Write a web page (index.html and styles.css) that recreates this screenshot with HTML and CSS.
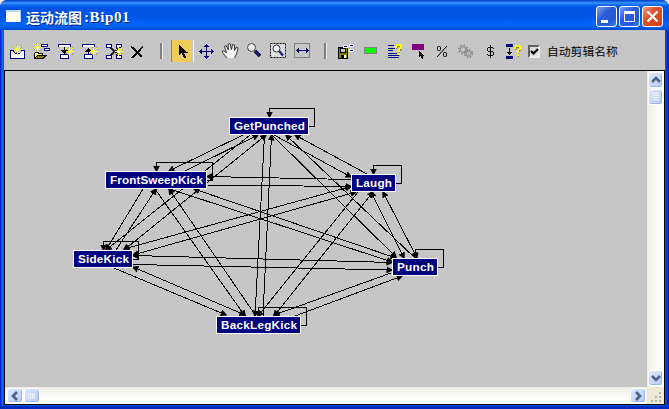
FILE: index.html
```html
<!DOCTYPE html>
<html lang="zh-CN">
<head>
<meta charset="utf-8">
<title>运动流图:Bip01</title>
<link rel="stylesheet" href="styles.css">
</head>
<body>
<svg width="0" height="0" class="defs">
  <defs>
    <g id="burst"><path d="M0-5V4M-4 0H4M-3-3L3 3M-3 3L3-3" stroke="#ffff30"/><path d="M-2-4h1M2-4h1M-4 2h1M3 2h1M-2 3h1M2 3h1M-4-2h1M3-2h1" stroke="#a5a04c"/><path d="M-1-1h2v2h-2z" fill="#fffff0"/></g>
    <path id="cursor" d="M0 0V11L2.6 8.6L4.8 13H7L5 8H8.5Z"/>
    <path id="help" d="M1 4V2.500L2 1H5L6 2V4L4 5.500V7.500M4 9V11" fill="none" stroke-width="1.800"/>
    <marker id="arrow" viewBox="0 0 7 7" refX="5.500" refY="3.500" markerWidth="7" markerHeight="7" markerUnits="userSpaceOnUse" orient="auto-start-reverse"><path d="M0 0L7 3.500L0 7Z"/></marker>
  </defs>
</svg>
<div class="window">
  <header class="titlebar">
    <span class="app-icon"></span>
    <h1 class="title">运动流图<span class="latin">:Bip01</span></h1>
    <div class="controls">
      <span class="control"><svg width="19" height="19"><path d="M4 14.500H11" stroke="#fff" stroke-width="3"/></svg></span>
      <span class="control"><svg width="19" height="19"><path d="M4.500 5V14.500H14.500V5" fill="none" stroke="#fff"/><path d="M4 5.500H15" stroke="#fff" stroke-width="3"/></svg></span>
      <span class="control close"><svg width="19" height="19"><path d="M4.500 4.500L14.500 14.500M14.500 4.500L4.500 14.500" stroke="#fff" stroke-width="2.300"/></svg></span>
    </div>
  </header>
  <nav class="toolbar">
    <svg class="tool" viewBox="5 40 24 22"><path d="M10.500 50.500H13L15 53H20L22 50.500H24.500V58.500H10.500Z" fill="#fff" stroke="#000080"/><use href="#burst" x="17.500" y="49.500"/></svg>
    <svg class="tool" viewBox="29 40 24 22"><use href="#burst" x="37.500" y="47.500"/><g fill="#fff" stroke="#000080"><path d="M41.500 44.500H47.500V46.500H41.500ZM44.500 48.500H49.500V50.500H44.500Z"/></g><path d="M34.500 58.500V53.500L36 52.500H38L39 53.500H42.500V55.500" fill="#ffff70" stroke="#000"/><path d="M34.500 58.500L37.500 55.500H46L43 58.500Z" fill="#808000" stroke="#000"/></svg>
    <svg class="tool" viewBox="53 40 24 22"><path d="M58.500 47V44.500H70.500V47M60.500 54.500H68.500V58.500H60.500Z" fill="#fff" stroke="#000080"/><path d="M64.500 47V53M62 50.500L64.500 53L67 50.500Z" stroke="#000"/><use href="#burst" x="69.500" y="51.500"/></svg>
    <svg class="tool" viewBox="77 40 24 22"><path d="M82.500 47V44.500H94.500V47M84.500 54.500H92.500V58.500H84.500Z" fill="#fff" stroke="#000080"/><path d="M88.500 49V54M86 51.500L88.500 49L91 51.500Z" stroke="#000"/><use href="#burst" x="93.500" y="51.500"/></svg>
    <svg class="tool" viewBox="101 40 24 22"><path d="M110 47L119 56M119 47L110 56" stroke="#223" stroke-width="1.500"/><path d="M106.500 44.500H111.500V47.500H106.500ZM116.500 44.500H121.500V47.500H116.500ZM106.500 55.500H111.500V58.500H106.500ZM116.500 55.500H121.500V58.500H116.500Z" fill="#fff" stroke="#000080"/><use href="#burst" x="118.500" y="51.500"/></svg>
    <svg class="tool" viewBox="125 40 24 22"><path d="M131 46.500L142 57M143 46.500L132 58" stroke="#000" stroke-width="2"/></svg>
    <i class="separator"></i>
    <span class="selected"><svg class="tool" viewBox="170 40 24 22"><use href="#cursor" x="179" y="44.500"/></svg></span>
    <svg class="tool" viewBox="194 40 24 22"><path d="M199 51.500H214M206.500 44V59" stroke="#000080"/><path d="M199 51.500L202 48.500V54.500ZM214 51.500L211 48.500V54.500ZM206.500 44L203.500 47H209.500ZM206.500 59L203.500 56H209.500Z" fill="#000080"/></svg>
    <svg class="tool smooth" viewBox="218 40 24 22"><path d="M227 58L222.500 52.500V51H224.500L226.500 53L224.500 46.500L226 45.500L228.500 50L228 44.500L230 43.500L231.500 49.500L232.500 44.500L234.500 45L234.500 50.500L236.500 47L238 48L236.500 54L234.500 58" fill="#f4f4f4" stroke="#222" stroke-width=".9"/></svg>
    <svg class="tool smooth" viewBox="242 40 24 22"><path d="M255 51L260 56" stroke="#000" stroke-width="3.600"/><path d="M255 51L259.500 55.500" stroke="#202090" stroke-width="2"/><circle cx="251.500" cy="47.500" r="4" fill="#e9eeee" stroke="#444"/><path d="M249 48L252 45" stroke="#fff"/></svg>
    <svg class="tool smooth" viewBox="266 40 24 22"><path d="M270.500 43.500H285.500V57.500H270.500Z" fill="#ddd" stroke="#000" stroke-dasharray="2 1"/><path d="M279 51L283 55.500" stroke="#202080" stroke-width="2.500"/><circle cx="276.500" cy="48.500" r="3.500" fill="#eef" stroke="#333"/></svg>
    <svg class="tool" viewBox="290 40 24 22"><path d="M294.500 43.500H309.500V57.500H294.500Z" fill="none" stroke="#808080"/><path d="M296 50.500H308" stroke="#000080"/><path d="M295.500 50.500L298.500 47.500V53.500ZM308.500 50.500L305.500 47.500V53.500Z" fill="#000050"/></svg>
    <i class="separator second"></i>
    <svg class="tool" viewBox="334 40 24 22"><path d="M338.500 47.500H347.500V58.500H338.500Z" fill="#808000" stroke="#000"/><path d="M340.500 48.500H345.500V52.500H340.500Z" fill="#ccc" stroke="#000"/><path d="M341 55H346V59H341Z"/><path d="M344 55H345.500V58H344Z" fill="#fff"/><path d="M343 45H348V48H343ZM349 44H354V47H349ZM349 49H354V52H349Z" fill="#fff"/><path d="M344 46.500H347M350 45.500H353M350 50.500H353" stroke="#000080"/></svg>
    <svg class="tool" viewBox="358 40 24 22"><path d="M364.500 47.500H376.500V53.500H364.500Z" fill="#0f0" stroke="#808080"/></svg>
    <svg class="tool" viewBox="382 40 24 22"><path d="M388 45.500H394M388 48.500H395M388 50.500H393M388 53.500H397M388 55.500H399M388 57.500H399" stroke="#000080"/><use href="#help" x="395.500" y="45" stroke="#85804b"/><use href="#help" x="395" y="44" stroke="#ff0"/></svg>
    <svg class="tool" viewBox="406 40 24 22"><path d="M412 44H424V50H412Z" fill="#800080"/><use href="#cursor" transform="translate(419 50.500) scale(.66)"/></svg>
    <svg class="tool smooth" viewBox="430 40 24 22"><g fill="none" stroke="#000"><path d="M447 46L437 57"/><rect x="437.500" y="46.500" width="3" height="4" rx="1"/><rect x="443.500" y="52.500" width="3" height="4" rx="1"/></g></svg>
    <svg class="tool smooth" viewBox="454 40 24 22"><g fill="none" stroke="#858585"><circle cx="463" cy="49.500" r="2.800"/><circle cx="463" cy="49.500" r="4.200" stroke-dasharray="1.500 1.800" stroke-width="1.700"/><circle cx="468.500" cy="53.500" r="2.500" fill="#bbb"/><circle cx="468.500" cy="53.500" r="3.800" stroke-dasharray="1.500 1.500" stroke-width="1.700"/></g></svg>
    <svg class="tool" viewBox="478 40 24 22"><path d="M490.500 45V58M494 48.500L492.500 47.500H488.500L487.500 48.500V50.500L488.500 51.500H492.500L493.500 52.500V54.500L492.500 55.500H488.500L487 54.500" fill="none" stroke="#000"/></svg>
    <svg class="tool" viewBox="502 40 24 22"><path d="M506 44H513V47H506ZM506 56H513V59H506Z" fill="#000080"/><path d="M509.500 48V55" stroke="#000"/><path d="M506.500 51.500H512.500L509.500 55Z"/><use href="#help" x="514.500" y="46" stroke="#85804b"/><use href="#help" x="514" y="45" stroke="#ff0"/></svg>
    <label class="auto-name"><span class="checkbox"><svg width="9" height="9"><path d="M1 4L3.500 6.500L8 2" fill="none" stroke="#000" stroke-width="2.200"/></svg></span>自动剪辑名称</label>
  </nav>
  <main class="workspace">
    <svg class="graph" viewBox="5 71 642 316">
      <g class="edges">
        <path marker-end="url(#arrow)" d="M243 135L169 171"/>
        <path marker-end="url(#arrow)" d="M185 171L258 135"/>
        <path marker-end="url(#arrow)" d="M250 135L106 250"/>
        <path marker-end="url(#arrow)" marker-start="url(#arrow)" d="M266 135L124 250"/>
        <path marker-end="url(#arrow)" d="M264.500 135L255 316"/>
        <path marker-start="url(#arrow)" d="M271.500 135L263 316"/>
        <path marker-end="url(#arrow)" d="M272 135L396 257"/>
        <path marker-start="url(#arrow)" d="M286 135L415 258"/>
        <path marker-end="url(#arrow)" d="M274 135L351 177"/>
        <path marker-start="url(#arrow)" d="M295 135L367 174"/>
        <path marker-start="url(#arrow)" d="M207 176.500L351 179.500"/>
        <path marker-end="url(#arrow)" d="M207 185L351 186.500"/>
        <path marker-end="url(#arrow)" d="M143 189L106 250"/>
        <path marker-start="url(#arrow)" d="M156 189L116 250"/>
        <path marker-end="url(#arrow)" d="M155 189L245 316"/>
        <path marker-start="url(#arrow)" d="M169 189L256 316"/>
        <path marker-end="url(#arrow)" d="M170 189L392 262"/>
        <path marker-start="url(#arrow)" marker-end="url(#arrow)" d="M194 189L396 258"/>
        <path marker-start="url(#arrow)" marker-end="url(#arrow)" d="M351 186.500L124 249"/>
        <path marker-start="url(#arrow)" marker-end="url(#arrow)" d="M356 192L133 255"/>
        <path marker-start="url(#arrow)" marker-end="url(#arrow)" d="M133 255.500L392 262.500"/>
        <path marker-end="url(#arrow)" d="M133 264.500L392 270"/>
        <path marker-end="url(#arrow)" d="M114 268L226 315"/>
        <path marker-start="url(#arrow)" marker-end="url(#arrow)" d="M133 267L245 315"/>
        <path marker-end="url(#arrow)" d="M358 192L258 316"/>
        <path marker-start="url(#arrow)" marker-end="url(#arrow)" d="M373 192L274 316"/>
        <path marker-start="url(#arrow)" marker-end="url(#arrow)" d="M371 192L404 258"/>
        <path marker-start="url(#arrow)" marker-end="url(#arrow)" d="M383 192L417 258"/>
        <path marker-end="url(#arrow)" d="M391 273L274 315"/>
        <path marker-start="url(#arrow)" d="M402 276L295 316"/>
      </g>
      <g class="loops">
        <path marker-end="url(#arrow)" d="M309 126.500H314.500V108.500H269.500V117"/>
        <path marker-end="url(#arrow)" d="M207 180.500H212.500V162.500H156.500V171"/>
        <path marker-end="url(#arrow)" d="M396 183.500H401.500V165.500H373.500V174"/>
        <path marker-end="url(#arrow)" d="M133 259.500H138.500V241.500H103.500V250"/>
        <path marker-end="url(#arrow)" d="M438 267.500H443.500V249.500H415.500V258"/>
        <path marker-end="url(#arrow)" d="M301 325.500H306.500V307.500H258.500V316"/>
      </g>
      <g class="nodes">
        <rect x="229.500" y="117.500" width="79" height="17"/><text x="234" y="130" textLength="71">GetPunched</text>
        <rect x="105.500" y="171.500" width="101" height="17"/><text x="110" y="184" textLength="93">FrontSweepKick</text>
        <rect x="351.500" y="174.500" width="44" height="17"/><text x="356" y="187" textLength="36">Laugh</text>
        <rect x="73.500" y="250.500" width="59" height="17"/><text x="78" y="263" textLength="51">SideKick</text>
        <rect x="392.500" y="258.500" width="45" height="17"/><text x="397" y="271" textLength="37">Punch</text>
        <rect x="216.500" y="316.500" width="84" height="17"/><text x="221" y="329" textLength="76">BackLegKick</text>
      </g>
    </svg>
    <div class="scroll vertical">
      <span class="scroll-button"><svg width="14" height="14"><path d="M3 9L7 5L11 9"/></svg></span>
      <span class="scroll-button thumb"><svg width="14" height="14"><path d="M4 3.500H10M4 5.500H10M4 7.500H10M4 9.500H10"/></svg></span>
      <span class="scroll-button last"><svg width="14" height="14"><path d="M3 5L7 9L11 5"/></svg></span>
    </div>
    <div class="scroll horizontal">
      <span class="scroll-button"><svg width="14" height="14"><path d="M9 3L5 7L9 11"/></svg></span>
      <span class="scroll-button thumb"><svg width="14" height="14"><path d="M3.500 4V10M5.500 4V10M7.500 4V10M9.500 4V10"/></svg></span>
      <span class="scroll-button last"><svg width="14" height="14"><path d="M5 3L9 7L5 11"/></svg></span>
    </div>
    <div class="grip"><svg width="17" height="17"><path d="M12 5h2v2h-2zM8 9h2v2H8zM12 9h2v2h-2zM4 13h2v2H4zM8 13h2v2H8zM12 13h2v2h-2z"/></svg></div>
  </main>
</div>
</body>
</html>
```
FILE: styles.css
```css
* { box-sizing: border-box; }
body { margin: 0; background: #ece9d8; overflow: hidden; }
svg { display: block; flex: none; }
.defs { position: absolute; }
.window {
  width: 669px; height: 409px; display: flex; flex-direction: column;
  padding: 0 4px 4px; border-radius: 7px 7px 0 0; overflow: hidden;
  background: linear-gradient(90deg, #0019cf 0, #0831d9 1px, #166aee 2px, #0855dd 4px, #0855dd 665px, #0441d8 666px, #0020a8 669px);
  box-shadow: inset 0 -3px #002bc0;
}
.titlebar {
  height: 30px; flex: none; margin: 0 -4px; padding: 0 6px;
  display: flex; align-items: center;
  background: linear-gradient(#0841c6 0, #0855dd 1px, #3c95ff 3px, #0b68f0 5px, #0054e3 8px, #0055e5 17px, #0266fb 24px, #0262ee 27px, #0046cb 30px);
}
.app-icon { width: 15px; height: 12px; margin-top: 2px; background: #fffff4; border-top: 2px solid #b9d8ff; border-right: 1px solid #a9c8f0; }
.title {
  margin: 3px 0 0 5px; display: flex; align-items: center; color: #fff;
  font: bold 14px/20px "Noto Sans CJK SC", sans-serif; text-shadow: 1px 1px #00268a;
}
.latin { font: bold 15px/20px "Liberation Serif", serif; letter-spacing: .6px; margin-left: 2px; }
.controls { margin-left: auto; display: flex; gap: 2px; margin-top: 3px; }
.control {
  width: 21px; height: 21px; border-radius: 3px; display: grid; place-items: center;
  border: 1px solid #fff; background: linear-gradient(135deg, #7b9ff0, #2a5ddb 40%, #2458d8 75%, #3d82f4);
}
.close { background: linear-gradient(135deg, #f0a088, #df5029 40%, #d8481f 75%, #c63a12); }
.toolbar {
  height: 40px; flex: none; display: flex; align-items: center; padding: 2px 0 0 1px;
  background: #c6c6c6;
}
.tool { width: 24px; height: 22px; fill: #000; shape-rendering: crispEdges; }
.smooth { shape-rendering: auto; }
.separator { width: 21px; height: 16px; flex: none; display: flex; padding-left: 11px; }
.second { width: 20px; padding-left: 10px; }
.separator::before { content: ""; width: 2px; background: #808080; border-right: 1px solid #eee; }
.selected { background: linear-gradient(90deg, #c6c6c6 1px, #808080 1px 2px, #efcb59 2px 22px, #c6c6c6 22px 23px, #f4f4f4 23px); }
.auto-name {
  display: flex; align-items: center; margin-left: 2px; gap: 7px;
  font: 11.8px/16px "Noto Sans CJK SC", sans-serif; white-space: nowrap; color: #000;
}
.checkbox {
  width: 12px; height: 13px; background: #ddd; display: grid; place-items: center;
  border: 2px solid; border-color: #606060 #eee #eee #606060;
}
.workspace {
  flex: none; height: 335px; display: grid;
  grid-template: 316px 17px / 642px 17px;
  border: 1px solid #000; background: #c6c6c6;
}
.graph { width: 642px; height: 316px; background: #c6c6c6; }
.edges, .loops { fill: none; stroke: #000; stroke-width: 1; shape-rendering: crispEdges; }
.nodes rect { fill: #000080; stroke: #fff; shape-rendering: crispEdges; }
.nodes text { fill: #fff; font: bold 11.7px "Liberation Sans", sans-serif; }
.scroll { display: flex; padding: 1px; gap: 1px; }
.vertical { flex-direction: column; background: linear-gradient(90deg, #eeede5, #fefefb 70%); }
.horizontal { background: linear-gradient(#eeede5, #fefefb 70%); }
.scroll-button {
  width: 16px; height: 16px; flex: none; display: grid; place-items: center;
  border: 1px solid #fff; border-radius: 3px;
  background: linear-gradient(135deg, #dce6ff, #b8cbfa); box-shadow: inset -1px -1px #9cb7ed;
}
.vertical .scroll-button { width: 15px; }
.horizontal .scroll-button { height: 15px; }
.scroll-button path { fill: none; stroke: #4d6185; stroke-width: 2.6; }
.thumb path { stroke: #eef4ff; stroke-width: 1; }
.vertical .last { margin-top: auto; }
.horizontal .last { margin-left: auto; }
.horizontal { padding-left: 2px; }
.grip { background: #ece9d8; }
.grip path { fill: #b8b4a3; }
```
